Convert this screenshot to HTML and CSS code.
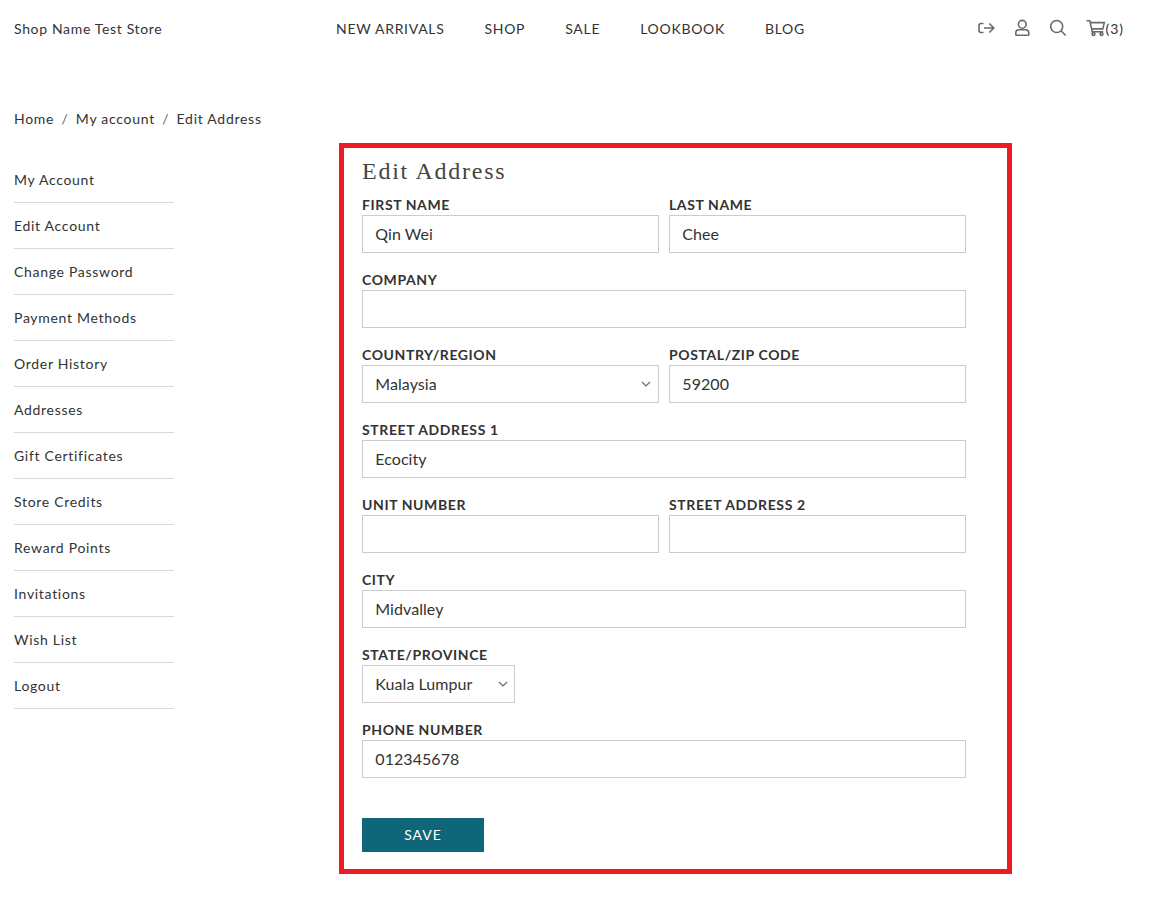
FILE: index.html
```html
<!DOCTYPE html>
<html lang="en">
<head>
<meta charset="utf-8">
<title>Edit Address</title>
<link rel="stylesheet" href="styles.css">
</head>
<body>
<header class="header">
  <div class="brand">Shop Name Test Store</div>
  <nav class="nav"><a>NEW ARRIVALS</a><a>SHOP</a><a>SALE</a><a>LOOKBOOK</a><a>BLOG</a></nav>
  <div class="tools">
    <svg class="tool-logout" width="18" height="14" viewBox="0 0 18 14"><path d="M6.500 1.500H4Q2 1.500 2 3.500v5Q2 10.500 4 10.500H6.500M7 6h10M12.300 1.500L16.800 6l-4.500 4.500"/></svg>
    <svg class="tool-user" width="16" height="18" viewBox="0 0 16 18"><circle cx="8.300" cy="5.300" r="3.900"/><path d="M5 10.800h6.600q3.200 0 3.200 3.300v1.300q0 .8-.8.8H2.600q-.8 0-.8-.8v-1.300Q1.800 10.800 5 10.800z"/></svg>
    <svg class="tool-search" width="18" height="18" viewBox="0 0 18 18"><circle cx="7.700" cy="7.500" r="6"/><path d="M12.200 12l4.500 4.500"/></svg>
    <svg class="tool-cart" width="20" height="18" viewBox="0 0 20 18"><path d="M.5 1.700h3.300l2.400 11h11M4.300 3.600h14l-1.500 6.300H5.700"/><circle cx="7.500" cy="15" r="1.400"/><circle cx="15.500" cy="15" r="1.400"/></svg>
    <span class="count">(3)</span>
  </div>
</header>
<div class="crumbs"><a>Home</a><i>/</i><a>My account</a><i>/</i><a>Edit Address</a></div>
<main class="main">
  <ul class="side">
    <li>My Account</li><li>Edit Account</li><li>Change Password</li><li>Payment Methods</li><li>Order History</li><li>Addresses</li><li>Gift Certificates</li><li>Store Credits</li><li>Reward Points</li><li>Invitations</li><li>Wish List</li><li>Logout</li>
  </ul>
  <section class="panel">
    <h1>Edit Address</h1>
    <form class="form">
      <label><b>FIRST NAME</b><span class="box">Qin Wei</span></label>
      <label><b>LAST NAME</b><span class="box">Chee</span></label>
      <label class="wide"><b>COMPANY</b><span class="box"></span></label>
      <label><b>COUNTRY/REGION</b><span class="box select">Malaysia<svg width="10" height="6" viewBox="0 0 10 6"><path d="M1 1l4 4 4-4"/></svg></span></label>
      <label><b>POSTAL/ZIP CODE</b><span class="box">59200</span></label>
      <label class="wide"><b>STREET ADDRESS 1</b><span class="box">Ecocity</span></label>
      <label><b>UNIT NUMBER</b><span class="box"></span></label>
      <label><b>STREET ADDRESS 2</b><span class="box"></span></label>
      <label class="wide"><b>CITY</b><span class="box">Midvalley</span></label>
      <label class="wide"><b>STATE/PROVINCE</b><span class="box select state">Kuala Lumpur<svg width="10" height="6" viewBox="0 0 10 6"><path d="M1 1l4 4 4-4"/></svg></span></label>
      <label class="wide"><b>PHONE NUMBER</b><span class="box">012345678</span></label>
    </form>
    <button class="save">SAVE</button>
  </section>
</main>
</body>
</html>
```
FILE: styles.css
```css
* { box-sizing: border-box; }
body { margin: 0; width: 1168px; height: 897px; background: #fff; color: #333; font: 14px/20px Lato, sans-serif; letter-spacing: .7px; overflow: hidden; }
.header { display: flex; height: 58px; padding: 19px 0 0 14px; }
.brand { width: 322px; letter-spacing: .66px; }
.nav { display: flex; gap: 40px; width: 642px; }
.tools { display: flex; align-items: flex-start; }
svg { fill: none; stroke: #6a6a6a; stroke-width: 1.6; display: block; }
.tool-logout { margin: 3px 18px 0 -1px; }
.tool-user { margin: 0 19px 0 1px; }
.tool-search { margin-right: 19px; }
.count { margin-left: -.5px; letter-spacing: .9px; }
.crumbs { display: flex; padding: 51px 0 0 14px; letter-spacing: .72px; }
.crumbs i { font-style: normal; padding: 0 7.300px; color: #666; }
.main { display: flex; padding: 14px 0 0 14px; }
.side { list-style: none; margin: 14px 165px 0 0; padding: 0; width: 160px; }
.side li { height: 46px; padding-top: 13px; border-bottom: 1px solid #d9d9d9; }
.panel { width: 673px; height: 731px; border: 5px solid #ed1c24; padding: 3px 41px 0 18px; }
h1 { margin: 0; font: 400 24px/40px "Liberation Serif", serif; letter-spacing: 1.75px; height: 44px; color: #444; }
.form { display: grid; grid-template-columns: 297px 297px; column-gap: 10px; }
.form label { height: 75px; }
.form b { display: block; height: 20px; line-height: 20px; letter-spacing: .6px; }
.form .wide { grid-column: 1 / 3; }
.box { display: flex; align-items: center; height: 38px; border: 1px solid #ccc; padding: 0 12.300px; font-size: 16px; letter-spacing: .06px; }
.select { justify-content: space-between; padding-right: 7px; }
.select svg { stroke-width: 1.2; }
.state { width: 153px; padding-right: 6px; }
.save { display: block; width: 122px; height: 34px; margin-top: 23px; padding: 0 0 2px; border: 0; background: #0f6678; color: #fff; font: 14px Lato, sans-serif; letter-spacing: 1px; }
```
